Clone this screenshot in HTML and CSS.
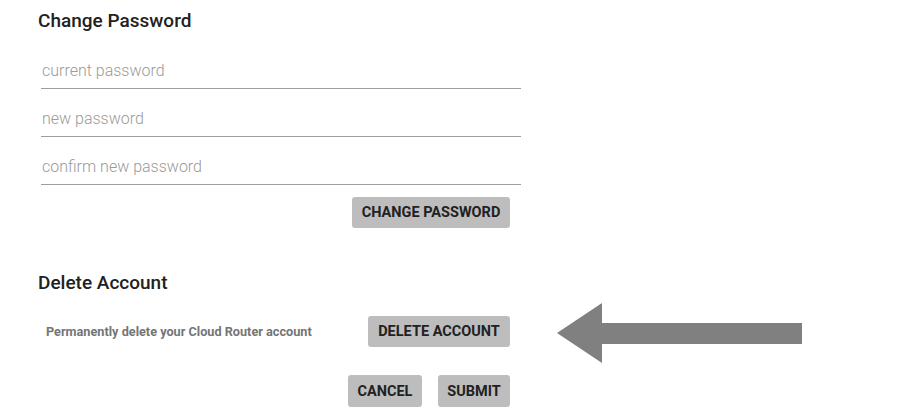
FILE: index.html
```html
<!DOCTYPE html>
<html lang="en">
<head>
  <meta charset="UTF-8" />
  <title>Account Settings</title>
  <meta name="viewport" content="width=device-width, initial-scale=1.0" />
  <link rel="stylesheet" href="styles.css">
</head>
<body>

  <!-- Change Password -->
  <section class="block">
    <h2>Change Password</h2>
    <div class="fields">
      <input type="password" placeholder="current password" />
      <input type="password" placeholder="new password" />
      <input type="password" placeholder="confirm new password" />
      <div class="actions">
        <button class="wide">CHANGE PASSWORD</button>
      </div>
    </div>
  </section>

  <!-- Delete Account -->
  <section class="block delete">
    <h2>Delete Account</h2>
    <div class="delete-row">
      <p class="note">Permanently delete your Cloud Router account</p>
      <button class="danger">DELETE ACCOUNT</button>
      <svg class="arrow" width="245" height="60" viewBox="0 0 245 60">
        <polygon points="0,30 45,0 45,20 245,20 245,41 45,41 45,60" fill="#808080" />
      </svg>
    </div>
    <div class="footer">
      <button>CANCEL</button>
      <button>SUBMIT</button>
    </div>
  </section>

</body>
</html>
```

FILE: styles.css
```css
body {
  font-family: 'Roboto', 'Liberation Sans', sans-serif;
  background: white;
  color: #212121;
  margin: 0;
  padding: 0;
}

h2 {
  font-size: 19px;
  font-weight: 500;
  line-height: 22px;
  margin: 0;
}

.block {
  padding-left: 38px;
}

.block:first-child {
  padding-top: 10px;
}

.fields {
  width: 480px;
  margin-left: 3px;
  padding-top: 9px;
}

input {
  display: block;
  box-sizing: border-box;
  width: 100%;
  height: 48px;
  padding: 19px 1px 7px;
  font-family: inherit;
  font-size: 16px;
  font-weight: 300;
  border: none;
  border-bottom: 1px solid #9e9e9e;
  outline: none;
}

input::placeholder {
  color: #9a9a9a;
}

.actions {
  display: flex;
  justify-content: flex-end;
  padding-right: 11px;
  margin-top: 12px;
}

button {
  font-family: inherit;
  font-size: 14.5px;
  font-weight: 700;
  color: #212121;
  background: #bdbdbd;
  border: none;
  border-radius: 3px;
  height: 32px;
  padding: 0 8px;
  cursor: pointer;
}

.wide {
  width: 158px;
  height: 31px;
}

.delete {
  padding-top: 44px;
}

.delete-row {
  display: flex;
  align-items: center;
  margin-top: 7px;
  padding-left: 8px;
}

.note {
  width: 322px;
  margin: 0;
  font-size: 12.7px;
  font-weight: 700;
  color: #757575;
}

.danger {
  width: 142px;
  height: 31px;
}

.arrow {
  margin: 2px 0 -2px 47px;
  align-self: flex-start;
}

.footer {
  display: flex;
  gap: 16px;
  width: 472px;
  justify-content: flex-end;
  margin-top: 14px;
}

.footer button:first-child {
  width: 74px;
}

.footer button:last-child {
  width: 72px;
}
```
